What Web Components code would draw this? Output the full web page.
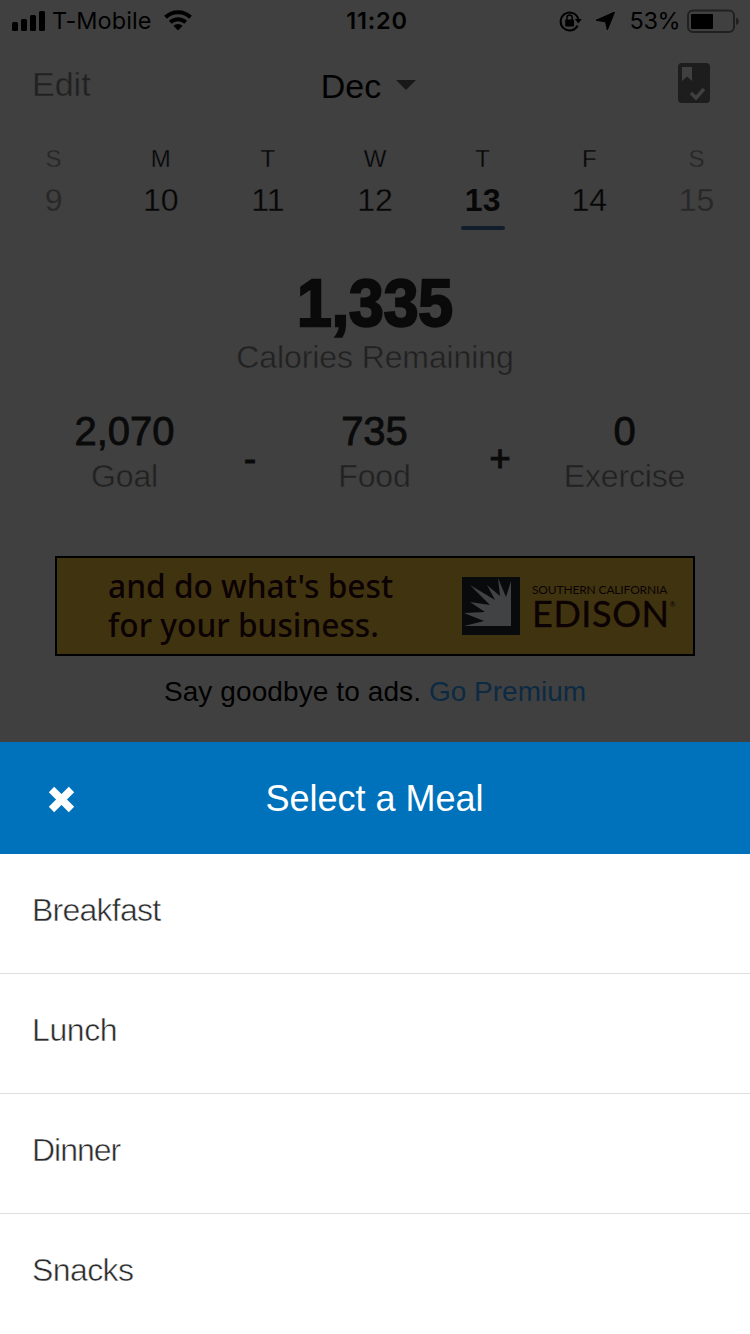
<!DOCTYPE html>
<html lang="en">
<head>
<meta charset="utf-8">
<title>Select a Meal</title>
<style>
  body {
    margin: 0;
    font-family: "Liberation Sans", Arial, sans-serif;
    background: #404040;
    --color-shade: #404040;
    --color-ink: #0a0a0a;
    --color-muted: #212121;
    --color-brand: #0072bc;
  }
</style>
</head>
<body>
<diary-screen>
  <status-bar carrier="T-Mobile" time="11:20" battery="53%"></status-bar>
  <diary-nav><span slot="action">Edit</span>Dec</diary-nav>
  <week-strip>
    <week-day name="S" muted>9</week-day>
    <week-day name="M">10</week-day>
    <week-day name="T">11</week-day>
    <week-day name="W">12</week-day>
    <week-day name="T" selected>13</week-day>
    <week-day name="F">14</week-day>
    <week-day name="S" muted>15</week-day>
  </week-strip>
  <calorie-summary>
    <span slot="remaining">1,335</span>
    <calorie-stat label="Goal">2,070</calorie-stat>
    <math-sign></math-sign>
    <calorie-stat label="Food">735</calorie-stat>
    <math-sign plus></math-sign>
    <calorie-stat label="Exercise">0</calorie-stat>
  </calorie-summary>
  <ad-banner>and do what's best<br>for your business.</ad-banner>
  <premium-line>Say goodbye to ads. <span slot="link">Go Premium</span></premium-line>
</diary-screen>
<meal-sheet>
  <span slot="title">Select a Meal</span>
  <meal-option>Breakfast</meal-option>
  <meal-option style="--track: -0.4px">Lunch</meal-option>
  <meal-option style="--track: -1px">Dinner</meal-option>
  <meal-option style="--track: -0.6px">Snacks</meal-option>
</meal-sheet>

<script>
  // Small helper: every element here is a template plus its attributes
  const define = (name, render) => {
    customElements.define(name, class extends HTMLElement {
      constructor() {
        super();
        this.attachShadow({ mode: 'open' });
      }

      connectedCallback() {
        this.shadowRoot.innerHTML = render(this);
      }
    });
  };

  define('diary-screen', () => `
    <style>
      :host {
        display: flex;
        flex-direction: column;
        height: 742px;
        background: var(--color-shade);
        color: var(--color-ink);
      }
    </style>
    <slot></slot>
  `);

  define('status-bar', (el) => `
    <style>
      :host {
        display: grid;
        grid-template-columns: 1fr auto 1fr;
        align-items: center;
        height: 41px;
        padding: 0 11px 0 12px;
        box-sizing: border-box;
        color: #000;
        font: 23.5px/41px Inter, sans-serif;
      }
      div { display: flex; align-items: center; }
      svg { display: block; flex: none; }
      .carrier { margin: 0 13px 0 6px; letter-spacing: 0.05px; }
      .time { font-weight: 600; letter-spacing: 0.8px; padding-left: 3px; }
      .right { justify-content: flex-end; }
      .arrow { margin: 0 15px 0 14px; }
      .charge { margin-right: 7px; letter-spacing: -0.5px; }
    </style>
    <div>
      <svg width="34" height="20" viewBox="0 0 34 20">
        <rect x="0" y="11" width="6" height="9" rx="1.5"/>
        <rect x="9" y="8" width="6" height="12" rx="1.5"/>
        <rect x="18" y="4" width="6" height="16" rx="1.5"/>
        <rect x="27" y="0" width="6" height="20" rx="1.5"/>
      </svg>
      <span class="carrier">${el.getAttribute('carrier')}</span>
      <svg width="28" height="21" viewBox="0 0 28 21">
        <path d="M1.5 7.2a18 18 0 0 1 25 0M6.3 12.2a11.2 11.2 0 0 1 15.4 0" fill="none" stroke="#000" stroke-width="4"/>
        <path d="M9.3 15.8a6.8 6.8 0 0 1 9.4 0L14 20.5z"/>
      </svg>
    </div>
    <span class="time">${el.getAttribute('time')}</span>
    <div class="right">
      <svg width="23" height="22" viewBox="0 0 23 22">
        <path d="M18.7 15.5A9 9 0 1 1 19.3 9" fill="none" stroke="#000" stroke-width="2"/>
        <path d="M15.8 9h7l-3.5 4.6z"/>
        <rect x="6.2" y="9.5" width="8.8" height="7" rx="1"/>
        <path d="M8 10V7.5a2.6 2.6 0 0 1 5.2 0V10" fill="none" stroke="#000" stroke-width="1.5"/>
      </svg>
      <svg class="arrow" width="19" height="18" viewBox="0 0 19 18">
        <path d="M18.6 0 11.3 18 9.5 9.8 0 8.3z" stroke="#000" stroke-linejoin="round"/>
      </svg>
      <span class="charge">${el.getAttribute('battery')}</span>
      <svg width="52" height="24" viewBox="0 0 52 24">
        <rect x="1" y="1.5" width="46" height="21.5" rx="5" fill="none" stroke="#202020" stroke-width="2"/>
        <rect x="4" y="5" width="22" height="15" rx="1"/>
        <path d="M49 8.5q3 1.2 3 3.8t-3 3.8z" fill="#202020"/>
      </svg>
    </div>
  `);

  define('diary-nav', () => `
    <style>
      :host {
        display: grid;
        grid-template-columns: 1fr auto 1fr;
        height: 88px;
        padding: 0 40px 0 32px;
        font-size: 34px;
        line-height: 86px;
        color: #000;
      }
      ::slotted([slot="action"]) { color: #202020; -webkit-text-stroke: 0.4px var(--color-shade); }
      .month { display: flex; align-items: center; padding: 2px 5px 0 0; height: 86px; }
      .month svg { margin: -3px 0 0 15px; }
      .book { justify-self: end; margin-top: 22px; }
      svg { display: block; }
    </style>
    <slot name="action"></slot>
    <div class="month">
      <slot></slot>
      <svg width="20" height="10" viewBox="0 0 20 10"><path d="M0 0h20L10 10z" fill="#181818"/></svg>
    </div>
    <svg class="book" width="32" height="40" viewBox="0 0 32 40">
      <rect width="32" height="40" rx="4" fill="#1d1d1d"/>
      <path d="M4 4h10v14l-5-4.5L4 18z" fill="#404040"/>
      <path d="m13 30 5 5 8-9" fill="none" stroke="#404040" stroke-width="3.4"/>
    </svg>
  `);

  define('week-strip', () => `
    <style>
      :host {
        display: grid;
        grid-template-columns: repeat(7, 1fr);
        height: 125px;
        padding-top: 15px;
        box-sizing: border-box;
      }
    </style>
    <slot></slot>
  `);

  define('week-day', (el) => `
    <style>
      :host {
        display: flex;
        flex-direction: column;
        align-items: center;
        font-size: 32px;
        line-height: 40px;
        color: #070707;
      }
      :host([muted]) { color: #272727; }
      :host([selected]) { padding-left: 1px; }
      .name { font-size: 24px; line-height: 30px; margin-bottom: 6px; -webkit-text-stroke: 0.3px var(--color-shade); }
      .date { -webkit-text-stroke: 0.3px var(--color-shade); }
      .mark { width: 44px; height: 4px; margin-top: 6px; border-radius: 2px; }
      :host([selected]) .date { font-weight: bold; -webkit-text-stroke: 0; }
      :host([selected]) .mark { background: #121d2b; }
    </style>
    <span class="name">${el.getAttribute('name')}</span>
    <span class="date"><slot></slot></span>
    <span class="mark"></span>
  `);

  define('calorie-summary', () => `
    <style>
      :host { display: block; height: 302px; padding-top: 15px; box-sizing: border-box; text-align: center; }
      .remaining {
        font-size: 66px;
        line-height: 68px;
        font-weight: bold;
        transform: scaleX(0.945);
        -webkit-text-stroke: 2.4px var(--color-ink);
      }
      .caption {
        font-size: 32px;
        line-height: 40px;
        letter-spacing: -0.1px;
        color: var(--color-muted);
        -webkit-text-stroke: 0.5px var(--color-shade);
      }
      .stats {
        display: grid;
        grid-template-columns: repeat(5, 125px);
        justify-content: center;
        margin-top: 31px;
      }
    </style>
    <div class="remaining"><slot name="remaining"></slot></div>
    <div class="caption">Calories Remaining</div>
    <div class="stats"><slot></slot></div>
  `);

  define('calorie-stat', (el) => `
    <style>
      :host { display: flex; flex-direction: column; align-items: center; margin-left: -1px; }
      .value { font-size: 40px; line-height: 46px; -webkit-text-stroke: 0.8px var(--color-ink); }
      .label {
        font-size: 32px;
        line-height: 44px;
        letter-spacing: -0.15px;
        color: var(--color-muted);
        -webkit-text-stroke: 0.5px var(--color-shade);
      }
    </style>
    <span class="value"><slot></slot></span>
    <span class="label">${el.getAttribute('label')}</span>
  `);

  define('math-sign', (el) => `
    <style>
      :host { display: flex; align-items: center; justify-content: center; padding-top: 12px; }
      b { font-weight: normal; font-size: 36px; line-height: 40px; -webkit-text-stroke: 1.2px var(--color-ink); }
    </style>
    <b>${el.hasAttribute('plus') ? '+' : '-'}</b>
  `);

  define('ad-banner', () => `
    <style>
      :host {
        display: flex;
        align-items: center;
        width: 640px;
        height: 100px;
        margin: 0 auto;
        box-sizing: border-box;
        border: 2px solid #000;
        background: #403410;
        color: #0c0204;
      }
      .copy {
        width: 354px;
        padding: 0 0 2px 51px;
        font: 500 31.7px/39px "Noto Sans", "Open Sans", sans-serif;
        white-space: nowrap;
      }
      svg { display: block; flex: none; }
      .name { margin: 2px 0 0 12px; font-family: Lato, sans-serif; white-space: nowrap; }
      .region { font-size: 12px; line-height: 12px; letter-spacing: -0.15px; }
      .brand { display: flex; font-size: 36px; line-height: 34px; letter-spacing: 0.6px; -webkit-text-stroke: 0.4px; }
      sup { font-size: 7px; line-height: 16px; letter-spacing: 0; -webkit-text-stroke: 0; }
    </style>
    <div class="copy"><slot></slot></div>
    <svg width="58" height="58" viewBox="0 0 58 58">
      <path d="M0 0h58v58H0z" fill="#080a0b"/>
      <path d="M2 49 22 44 2 36 23 35 8 25 28 28 8 8 33 23 25 8 38 19 36 1 44 20 49 4V49z" fill="#404244"/>
    </svg>
    <div class="name">
      <div class="region">SOUTHERN CALIFORNIA</div>
      <div class="brand">EDISON<sup>®</sup></div>
    </div>
  `);

  define('premium-line', () => `
    <style>
      :host {
        display: block;
        margin-top: 16px;
        text-align: center;
        font-size: 28px;
        line-height: 40px;
        letter-spacing: 0.1px;
        color: #000;
      }
      ::slotted([slot="link"]) { color: #0c2a42; letter-spacing: 0; }
    </style>
    <slot></slot><slot name="link"></slot>
  `);

  define('meal-sheet', () => `
    <style>
      :host { display: block; height: 592px; overflow: hidden; background: #fff; }
      header {
        display: grid;
        grid-template-columns: 1fr auto 1fr;
        align-items: center;
        height: 112px;
        padding: 0 49px 0 48px;
        background: var(--color-brand);
        color: #fff;
        font-size: 36px;
        line-height: 114px;
      }
      ::slotted(meal-option:last-of-type) { border-bottom: 0; }
    </style>
    <header>
      <svg width="27" height="27" viewBox="0 0 27 27">
        <path d="m3.5 3.5 20 20m0-20-20 20" stroke="#fff" stroke-width="7.6"/>
      </svg>
      <slot name="title"></slot>
    </header>
    <slot></slot>
  `);

  define('meal-option', () => `
    <style>
      :host {
        display: block;
        height: 120px;
        padding-left: 32px;
        box-sizing: border-box;
        border-bottom: 1px solid #dcdfdf;
        color: #2b2b2b;
        font-size: 32px;
        line-height: 112px;
        letter-spacing: var(--track, -0.75px);
        -webkit-text-stroke: 0.5px #fff;
      }
    </style>
    <slot></slot>
  `);
</script>
</body>
</html>
